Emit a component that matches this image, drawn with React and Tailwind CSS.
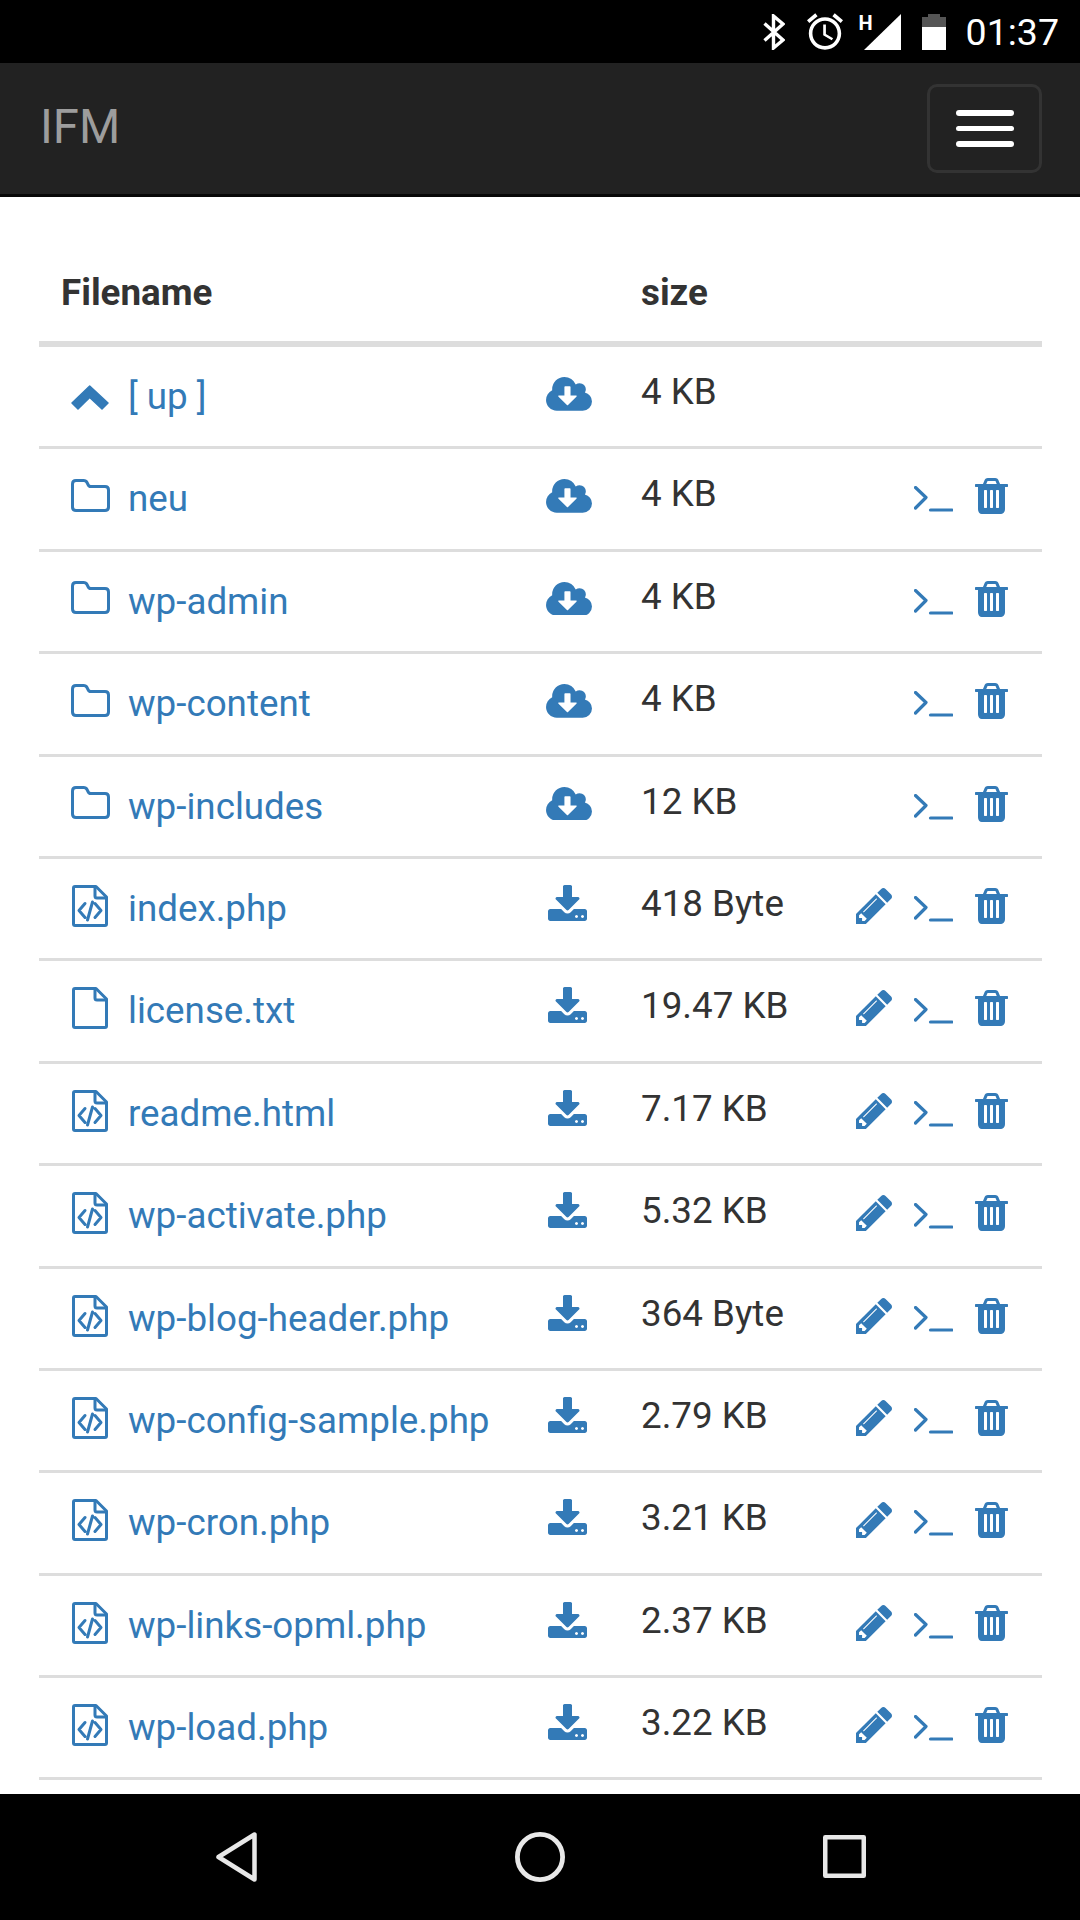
const FONT = "font-['Roboto',sans-serif]";

function ChevronUp() {
  return (
    <svg width="38" height="25" viewBox="0 0 38 25" className="block mt-[38px]" fill="#337ab7" stroke="#337ab7" strokeWidth="1.5" strokeLinejoin="round">
      <path d="M18.7 1 L37 18 L31 24 L18.7 12.5 L7 24 L1 18 Z" />
    </svg>
  );
}
function Folder() {
  return (
    <svg width="39" height="33" viewBox="0 0 39 33" className="block mt-[29.5px]" fill="none" stroke="#337ab7" strokeWidth="3" strokeLinejoin="round">
      <path d="M5 1.5 H12.5 Q15 1.5 16 3.5 L17 5.5 Q17.6 7.5 20 7.5 H34 Q37.5 7.5 37.5 11 V28 Q37.5 31.5 34 31.5 H5 Q1.5 31.5 1.5 28 V5 Q1.5 1.5 5 1.5 Z" />
    </svg>
  );
}
function FileIcon({ code }) {
  return (
    <svg width="36" height="42" viewBox="0 0 36 42" className="block mt-[26px] ml-[1px]" fill="none" stroke="#337ab7" strokeWidth="3" strokeLinejoin="round">
      <path d="M1.5 3 Q1.5 1.5 3 1.5 H24 L34.5 12 V39 Q34.5 40.5 33 40.5 H3 Q1.5 40.5 1.5 39 Z" />
      <path d="M23 1.5 V11 Q23 13 25 13 H34.5" />
      {code && <path d="M13 18.5 L7 25.5 L13 32.5 M23 18.5 L29 25.5 L23 32.5 M20.5 17 L15.5 35" strokeLinecap="round" />}
    </svg>
  );
}
function Cloud() {
  return (
    <svg width="46" height="33.7" viewBox="0 128 1920 1408" className="block mt-[30px]" fill="#337ab7">
      <path d="M1280 928q0-14-9-23t-23-9h-224v-352q0-13-9.5-22.5t-22.5-9.5h-192q-13 0-22.5 9.5t-9.5 22.5v352h-224q-13 0-22.5 9.5t-9.5 22.5q0 14 9 23l352 352q9 9 23 9t23-9l351-351q10-12 10-24zm640 224q0 159-112.5 271.5t-271.5 112.5h-1088q-185 0-316.5-131.5t-131.5-316.5q0-130 70-240t188-165q-2-30-2-43 0-212 150-362t362-150q156 0 285.5 87t188.5 231q71-62 166-62 106 0 181 75t75 181q0 76-41 138 130 31 213.5 135.5t83.5 238.5z" />
    </svg>
  );
}
function Download() {
  return (
    <svg width="39" height="36" viewBox="64 0 1664 1536" className="block mt-[26px] ml-[2px]" fill="#337ab7">
      <path d="M1344 1344q0-26-19-45t-45-19-45 19-19 45 19 45 45 19 45-19 19-45zm256 0q0-26-19-45t-45-19-45 19-19 45 19 45 45 19 45-19 19-45zm128-224v320q0 40-28 68t-68 28h-1472q-40 0-68-28t-28-68v-320q0-40 28-68t68-28h465l135 136q58 56 136 56t136-56l136-136h464q40 0 68 28t28 68zm-325-569q17 41-14 70l-448 448q-18 19-45 19t-45-19l-448-448q-31-29-14-70 17-39 59-39h256v-448q0-26 19-45t45-19h256q26 0 45 19t19 45v448h256q42 0 59 39z" />
    </svg>
  );
}
function Pencil() {
  return (
    <svg width="36" height="36" viewBox="0 21 1515 1515" className="block mt-[29px]" fill="#337ab7">
      <path d="M363 1408l91-91-235-235-91 91v107h128v128h107zm523-928q0-22-22-22-10 0-17 7l-542 542q-7 7-7 17 0 22 22 22 10 0 17-7l542-542q7-7 7-17zm-54-192l416 416-832 832h-416v-416zm683 96q0 53-37 90l-166 166-416-416 166-165q36-38 90-38 53 0 91 38l235 234q37 39 37 91z" />
    </svg>
  );
}
function Terminal() {
  return (
    <svg width="39" height="26" viewBox="0 0 39 26" className="block mt-[37px] ml-[22px]" fill="none" stroke="#337ab7" strokeWidth="3.2" strokeLinecap="round" strokeLinejoin="round">
      <path d="M1.5 1.5 L12 11.5 L1.5 22" />
      <path d="M16.5 24 H38" />
    </svg>
  );
}
function Trash() {
  return (
    <svg width="33" height="36" viewBox="192 128 1408 1536" className="block mt-[29px] ml-[22px]" fill="#337ab7">
      <path d="M704 1376v-704q0-14-9-23t-23-9h-64q-14 0-23 9t-9 23v704q0 14 9 23t23 9h64q14 0 23-9t9-23zm256 0v-704q0-14-9-23t-23-9h-64q-14 0-23 9t-9 23v704q0 14 9 23t23 9h64q14 0 23-9t9-23zm256 0v-704q0-14-9-23t-23-9h-64q-14 0-23 9t-9 23v704q0 14 9 23t23 9h64q14 0 23-9t9-23zm-544-992h448l-48-117q-7-9-17-11h-317q-10 2-17 11zm928 32v64q0 14-9 23t-23 9h-96v948q0 83-47 143.5t-113 60.5h-832q-66 0-113-58.5t-47-141.5v-952h-96q-14 0-23-9t-9-23v-64q0-14 9-23t23-9h309l70-167q15-37 54-63t79-26h320q40 0 79 26t54 63l70 167h309q14 0 23 9t9 23z" />
    </svg>
  );
}

const rows = [
  { name: "[ up ]", size: "4 KB", kind: "up" },
  { name: "neu", size: "4 KB", kind: "dir" },
  { name: "wp-admin", size: "4 KB", kind: "dir" },
  { name: "wp-content", size: "4 KB", kind: "dir" },
  { name: "wp-includes", size: "12 KB", kind: "dir" },
  { name: "index.php", size: "418 Byte", kind: "code" },
  { name: "license.txt", size: "19.47 KB", kind: "txt" },
  { name: "readme.html", size: "7.17 KB", kind: "code" },
  { name: "wp-activate.php", size: "5.32 KB", kind: "code" },
  { name: "wp-blog-header.php", size: "364 Byte", kind: "code" },
  { name: "wp-config-sample.php", size: "2.79 KB", kind: "code" },
  { name: "wp-cron.php", size: "3.21 KB", kind: "code" },
  { name: "wp-links-opml.php", size: "2.37 KB", kind: "code" },
  { name: "wp-load.php", size: "3.22 KB", kind: "code" },
];

function Row({ r }) {
  const isFile = r.kind === "code" || r.kind === "txt";
  return (
    <div className="flex h-[102.4px] shrink-0 border-b-[3px] border-[#ddd] text-[36.75px] leading-[53px]">
      <div className="w-[507px] shrink-0 pl-[32px] flex items-start">
        <div className="w-[57px] shrink-0">
          {r.kind === "up" && <ChevronUp />}
          {r.kind === "dir" && <Folder />}
          {isFile && <FileIcon code={r.kind === "code"} />}
        </div>
        <span className="text-[#337ab7] pt-[23px] whitespace-nowrap">{r.name}</span>
      </div>
      <div className="w-[95px] shrink-0">{isFile ? <Download /> : <Cloud />}</div>
      <div className="w-[215px] shrink-0 text-[#333] pt-[18px] whitespace-nowrap">{r.size}</div>
      <div className="flex items-start">
        {isFile ? <Pencil /> : <div className="w-[36px]" />}
        {r.kind !== "up" && <Terminal />}
        {r.kind !== "up" && <Trash />}
      </div>
    </div>
  );
}

export default function App() {
  return (
    <div className={`${FONT} w-[1080px] h-[1920px] flex flex-col overflow-hidden bg-white`}>
      <div className="h-[63px] shrink-0 bg-black flex items-center justify-end pr-[21px]">
        <svg width="22" height="36" viewBox="0 0 22 36" fill="none" stroke="#fff" strokeWidth="3.4" className="block">
          <path d="M1.5 9.5 L20 26 L10.5 34 V2 L20 10 L1.5 26.5" />
        </svg>
        <svg width="36" height="37" viewBox="2 1.86 20 20.14" fill="#fff" className="block ml-[22px]">
          <path d="M22 5.72l-4.6-3.86-1.29 1.53 4.6 3.86L22 5.72zM7.88 3.39L6.6 1.86 2 5.71l1.29 1.53 4.59-3.85zM12.5 8H11v6l4.75 2.85.75-1.23-4-2.37V8zM12 4c-4.97 0-9 4.03-9 9s4.03 9 9 9c4.97 0 9-4.03 9-9s-4.03-9-9-9zm0 16c-3.87 0-7-3.13-7-7s3.13-7 7-7 7 3.13 7 7-3.13 7-7 7z" />
        </svg>
        <div className="relative ml-[21px] w-[37px] h-[36px]">
          <svg width="37" height="36" viewBox="0 0 37 36" fill="#fff" className="block">
            <path d="M37 0 V36 H0 Z" />
          </svg>
          <span className="absolute left-[-5px] top-[-1px] text-white text-[20px] leading-[20px] font-bold">H</span>
        </div>
        <svg width="24" height="36" viewBox="0 0 24 36" className="block ml-[21px]">
          <path d="M6 0 H18 V3 H24 V13 H0 V3 H6 Z" fill="#555" />
          <rect x="0" y="13" width="24" height="23" fill="#fff" />
        </svg>
        <span className="ml-[20px] text-white text-[37.5px] leading-[44px]">01:37</span>
      </div>

      <div className="h-[134px] shrink-0 bg-[#222] border-b-[3px] border-[#080808] flex items-center justify-between pl-[40px] pr-[38px]">
        <span className="text-[#9d9d9d] text-[47.25px] leading-none mb-[2px]">IFM</span>
        <button className="w-[115px] h-[89px] rounded-[10px] border-[3px] border-[#333] flex flex-col items-center justify-center gap-[10px]">
          <span className="block w-[58px] h-[5.5px] rounded-[3px] bg-white" />
          <span className="block w-[58px] h-[5.5px] rounded-[3px] bg-white" />
          <span className="block w-[58px] h-[5.5px] rounded-[3px] bg-white" />
        </button>
      </div>

      <div className="flex-1 min-h-0 overflow-hidden pl-[39px] pr-[38px] flex flex-col">
        <div className="flex h-[150px] shrink-0 items-end pb-[22px] border-b-[6px] border-[#ddd] text-[36.75px] leading-[53px] font-bold text-[#333]">
          <div className="w-[602px] shrink-0 pl-[22px]">Filename</div>
          <div>size</div>
        </div>
        {rows.map((r) => (
          <Row key={r.name} r={r} />
        ))}
      </div>

      <div className="h-[126px] shrink-0 bg-black flex items-start justify-between pl-[216px] pr-[214px] pt-[38px]">
        <svg width="41" height="50" viewBox="0 0 41 50" fill="none" stroke="#e8e8e8" strokeWidth="4.5" strokeLinejoin="round" className="block">
          <path d="M38.5 2.5 V47.5 L2.5 25 Z" />
        </svg>
        <svg width="50" height="50" viewBox="0 0 50 50" fill="none" stroke="#e8e8e8" strokeWidth="4.8" className="block">
          <circle cx="25" cy="25" r="22.6" />
        </svg>
        <svg width="43" height="43" viewBox="0 0 43 43" fill="none" stroke="#e8e8e8" strokeWidth="4.5" strokeLinejoin="round" className="block mt-[3px]">
          <rect x="2.25" y="2.25" width="38.5" height="38.5" />
        </svg>
      </div>
    </div>
  );
}
